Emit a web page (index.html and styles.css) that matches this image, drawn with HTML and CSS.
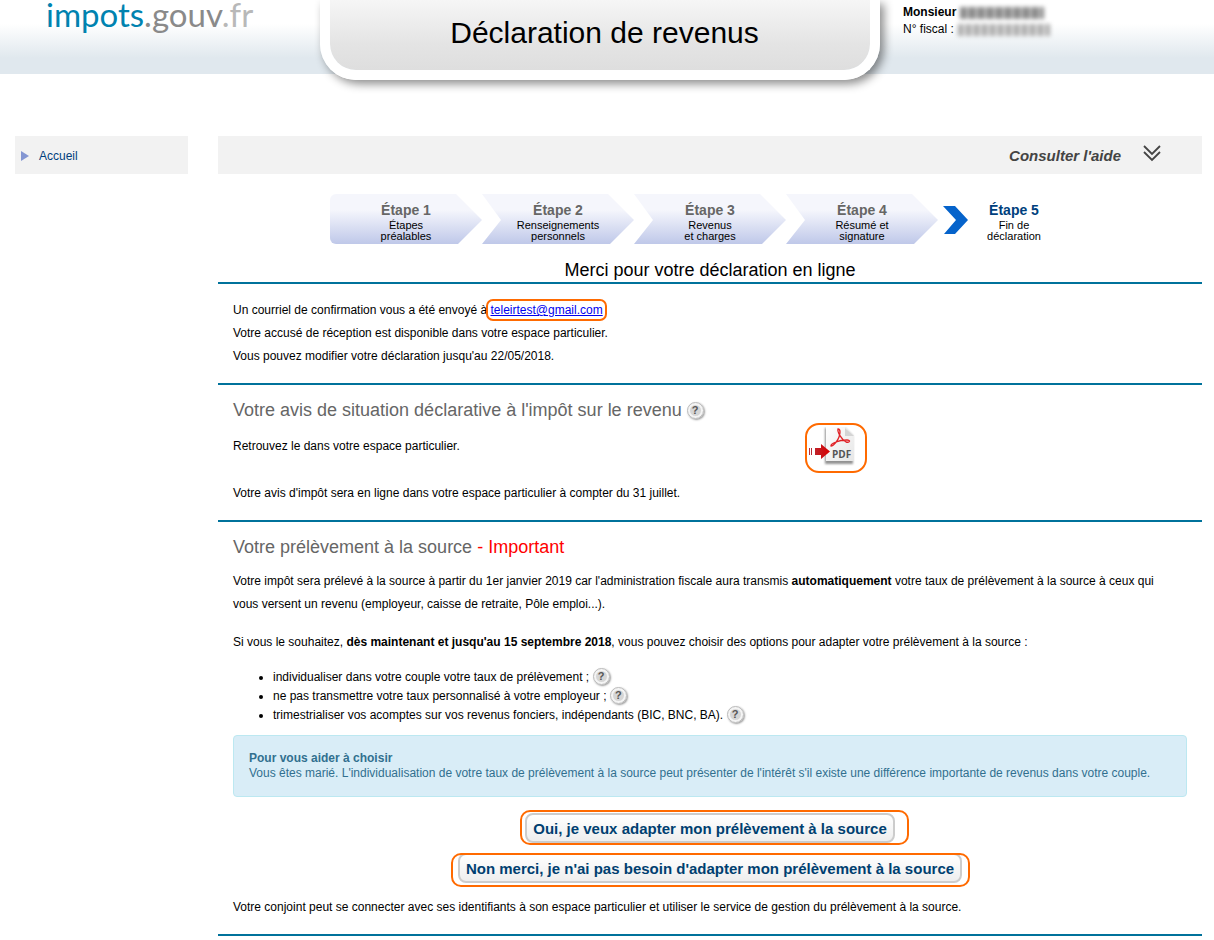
FILE: index.html
```html
<!DOCTYPE html>
<html lang="fr">
<head>
<meta charset="utf-8">
<title>Déclaration de revenus</title>
<link rel="stylesheet" href="styles.css">
</head>
<body>
<header class="masthead">
  <div class="logo"><span class="logo-name">impots</span><span class="logo-gov">.gouv</span><span class="logo-tld">.fr</span></div>
  <h1 class="banner">Déclaration de revenus</h1>
  <div class="user">
    <div class="user-line"><strong>Monsieur</strong><span class="masked masked-dark"></span></div>
    <div class="user-line">N° fiscal :<span class="masked"></span></div>
  </div>
</header>
<div class="page">
  <nav class="side">
    <svg class="side-arrow" viewBox="0 0 8 10"><path d="M0 0L8 5L0 10Z" fill="#8496d2"/></svg>
    <a class="side-link" href="#">Accueil</a>
  </nav>
  <main class="main">
    <button class="help-bar" type="button">
      <span>Consulter l'aide</span>
      <svg class="help-icon" viewBox="0 0 18 17" fill="none" stroke="#444" stroke-width="1.800"><path d="M1 1L9 9L17 1M1 7L9 15L17 7"/></svg>
    </button>
    <ol class="steps">
      <li class="step step-first"><b class="step-name">Étape 1</b><span>Étapes<br>préalables</span></li>
      <li class="step"><b class="step-name">Étape 2</b><span>Renseignements<br>personnels</span></li>
      <li class="step"><b class="step-name">Étape 3</b><span>Revenus<br>et charges</span></li>
      <li class="step"><b class="step-name">Étape 4</b><span>Résumé et<br>signature</span></li>
      <li class="step step-current"><svg class="step-mark" viewBox="0 0 25 28"><path d="M0 0H12L25 14L12 28H1L13 14Z" fill="#0563cb"/></svg><b class="step-name">Étape 5</b><span>Fin de<br>déclaration</span></li>
    </ol>
    <h2 class="thanks">Merci pour votre déclaration en ligne</h2>

    <section class="section">
      <p>Un courriel de confirmation vous a été envoyé à <a class="mail marked" href="#">teleirtest@gmail.com</a></p>
      <p>Votre accusé de réception est disponible dans votre espace particulier.</p>
      <p>Vous pouvez modifier votre déclaration jusqu'au 22/05/2018.</p>
    </section>

    <section class="section">
      <h3 class="heading">Votre avis de situation déclarative à l'impôt sur le revenu <button class="hint" type="button">?</button></h3>
      <div class="notice">
        <p class="notice-text">Retrouvez le dans votre espace particulier.</p>
        <a class="pdf" href="#" aria-label="PDF">
          <svg class="pdf-icon" viewBox="0 0 48 40">
            <defs>
              <linearGradient id="sheet" x1="0" y1="0" x2="1" y2="1"><stop offset="0" stop-color="#fff"/><stop offset="1" stop-color="#e6e6e6"/></linearGradient>
              <linearGradient id="red" x1="0" y1="0" x2="1" y2="0"><stop offset="0" stop-color="#b5303a"/><stop offset="1" stop-color="#d80000"/></linearGradient>
              <filter id="soft"><feGaussianBlur stdDeviation="1"/></filter>
            </defs>
            <path d="M16 1H36L44 9V37H16Z" fill="#777" opacity=".8" filter="url(#soft)"/>
            <path d="M17 0H36L45 9V34H17Z" fill="url(#sheet)"/>
            <path d="M36 1V9H45Z" fill="#d4d4d4"/>
            <path d="M29 2C32 2 31 7 30 10C29 13 25 19 22 19C21 17 29 13 38 13C42 13 41 16 37 15C33 13 28 5 29 2Z" fill="none" stroke="#e02227" stroke-width="1.300"/>
            <path d="M0 21H1V28H0ZM2 21H3V28H2ZM6 21H12V17L21 24.500L12 32V28H6Z" fill="url(#red)"/>
            <text class="pdf-label" x="23" y="31">PDF</text>
          </svg>
        </a>
      </div>
      <p class="after-notice">Votre avis d'impôt sera en ligne dans votre espace particulier à compter du 31 juillet.</p>
    </section>

    <section class="section section-last">
      <h3 class="heading">Votre prélèvement à la source <span class="alert">- Important</span></h3>
      <p class="intro">Votre impôt sera prélevé à la source à partir du 1er janvier 2019 car l'administration fiscale aura transmis <strong>automatiquement</strong> votre taux de prélèvement à la source à ceux qui vous versent un revenu (employeur, caisse de retraite, Pôle emploi...).</p>
      <p class="wish">Si vous le souhaitez, <strong>dès maintenant et jusqu'au 15 septembre 2018</strong>, vous pouvez choisir des options pour adapter votre prélèvement à la source :</p>
      <ul class="options">
        <li>individualiser dans votre couple votre taux de prélèvement ; <button class="hint" type="button">?</button></li>
        <li>ne pas transmettre votre taux personnalisé à votre employeur ; <button class="hint" type="button">?</button></li>
        <li>trimestrialiser vos acomptes sur vos revenus fonciers, indépendants (BIC, BNC, BA). <button class="hint" type="button">?</button></li>
      </ul>
      <div class="info">
        <strong>Pour vous aider à choisir</strong><br>
        Vous êtes marié. L'individualisation de votre taux de prélèvement à la source peut présenter de l'intérêt s'il existe une différence importante de revenus dans votre couple.
      </div>
      <div class="actions">
        <button class="action action-yes marked" type="button">Oui, je veux adapter mon prélèvement à la source</button>
        <button class="action action-no marked" type="button">Non merci, je n'ai pas besoin d'adapter mon prélèvement à la source</button>
      </div>
      <p>Votre conjoint peut se connecter avec ses identifiants à son espace particulier et utiliser le service de gestion du prélèvement à la source.</p>
    </section>
  </main>
</div>
</body>
</html>
```

FILE: styles.css
```css
* { box-sizing: border-box; }
body {
  margin: 0;
  background: #fff;
  color: #000;
  font: 12px/23px "Liberation Sans", Arial, sans-serif;
}
h1, h2, h3, p, ul, ol { margin: 0; padding: 0; font-weight: normal; }
button { font-family: inherit; cursor: pointer; }

.masthead {
  display: grid;
  grid-template-columns: 320px 560px 1fr;
  align-items: start;
  padding-bottom: 56px;
  background: linear-gradient(#fff 24px, #e0e8ee 58px) no-repeat 0 0 / 100% 74px;
}
.logo {
  padding-left: 46px;
  font: 400 33px/28px Lato, sans-serif;
}
.logo-name { color: #0083b0; }
.logo-gov { color: #8a8a8a; }
.logo-tld { color: #b8b8b8; }
.banner {
  height: 80px;
  padding: 13px 0 0 9px;
  border: solid #fff;
  border-width: 0 10px 10px;
  border-radius: 0 0 36px 36px;
  background: linear-gradient(#f6f6f6, #e4e4e4 44px, #dedede) padding-box;
  box-shadow: 4px 4px 10px rgba(0, 0, 0, .45);
  text-align: center;
  font-size: 30px;
  line-height: 40px;
}
.user { padding: 4px 0 0 23px; line-height: 17px; }
.user-line { display: flex; align-items: center; gap: 4px; }
.masked {
  width: 92px;
  height: 12px;
  background: repeating-linear-gradient(90deg, #aaa 0 5px, #ddd 5px 8px);
  filter: blur(2px);
}
.masked-dark { width: 84px; background: repeating-linear-gradient(90deg, #888 0 6px, #bbb 6px 9px); }

.page {
  display: grid;
  grid-template-columns: 173px 1fr;
  gap: 30px;
  align-items: start;
  padding: 0 12px 0 15px;
}
.side {
  display: flex;
  align-items: center;
  gap: 10px;
  height: 38px;
  padding: 2px 6px 0;
  background: #f2f2f2;
}
.side-arrow { width: 8px; height: 10px; }
.side-link { color: #003f7d; text-decoration: none; }

.help-bar {
  display: flex;
  align-items: center;
  justify-content: flex-end;
  gap: 22px;
  width: 100%;
  height: 38px;
  padding: 0 41px 0 0;
  border: 0;
  background: #f2f2f2;
  color: #444;
  font-size: 15px;
  font-weight: bold;
  font-style: italic;
}
.help-icon { width: 18px; height: 17px; margin-bottom: 4px; }

.steps {
  display: flex;
  justify-content: center;
  margin: 20px 0 14px;
  list-style: none;
}
.step {
  display: grid;
  align-content: start;
  row-gap: 1px;
  width: 152px;
  height: 50px;
  padding-top: 7px;
  background: linear-gradient(#f5f6fc 16px, #bfc8e9);
  clip-path: polygon(0 0, 126px 0, 100% 26px, 128px 100%, 0 100%, 19px 26px);
  text-align: center;
  font-size: 11px;
  line-height: 11px;
}
.step-first {
  border-radius: 6px 0 0 6px;
  clip-path: polygon(0 0, 126px 0, 100% 26px, 128px 100%, 0 100%);
}
.step-current { position: relative; background: none; clip-path: none; }
.step-mark { position: absolute; top: 12px; left: 5px; width: 25px; height: 28px; }
.step-name { color: #666; font-size: 14px; line-height: 18px; }
.step-current .step-name { color: #003f7d; }

.thanks { text-align: center; font-size: 18px; line-height: 24px; }
.section { padding: 15px; border-top: 2px solid #00729b; }
.section-last { border-bottom: 2px solid #00729b; }

.marked { position: relative; }
.marked::after {
  content: "";
  position: absolute;
  inset: -4px;
  border: 2px solid #ff6a00;
  border-radius: 7px;
}
.mail { color: #00e; }

.heading { margin-bottom: 3px; color: #666; font-size: 18px; line-height: 20px; }
.alert { color: #f00; }
.hint {
  width: 17px;
  height: 17px;
  margin: -2px 0 0;
  padding: 0;
  border: 3px solid #f4f4f4;
  border-radius: 50%;
  outline: 1px solid #bbb;
  outline-offset: -1px;
  background: #d6d6d6;
  box-shadow: 1px 1px 2px #999;
  color: #555;
  font-size: 11px;
  font-weight: bold;
  line-height: 11px;
  vertical-align: middle;
}
.notice { display: grid; grid-template-columns: 3fr 2fr; align-items: start; }
.notice-text { padding-top: 12px; }
.pdf {
  display: flex;
  justify-content: flex-start;
  width: 62px;
  height: 50px;
  padding: 2px;
  border: 2px solid #ff6a00;
  border-radius: 14px;
}
.pdf-icon { width: 48px; height: 40px; }
.pdf-label { fill: #555; font: bold 10px "Open Sans", sans-serif; }
.after-notice { margin-top: 9px; }

.intro { margin-top: 13px; padding-right: 12px; }
.wish { margin-top: 15px; }
.options { margin-top: 14px; padding-left: 40px; line-height: 19px; }
.info {
  margin-top: 10px;
  padding: 15px;
  border: 1px solid #bce8f1;
  border-radius: 4px;
  background: #d9edf7;
  color: #31708f;
  line-height: 15px;
}
.actions {
  display: flex;
  flex-direction: column;
  align-items: center;
  gap: 10px;
  margin: 16px 0 13px;
}
.action {
  height: 30px;
  padding: 0 6px;
  border: 2px solid #ccc;
  border-radius: 8px;
  background: linear-gradient(#fff, #eee);
  color: #003f70;
  font-size: 15px;
  font-weight: bold;
}
.action::after { border-radius: 10px; }
.action-yes::after { inset: -5px -16px -4px -7px; }
.action-no::after { inset: -2px -10px -6px -9px; }
```
